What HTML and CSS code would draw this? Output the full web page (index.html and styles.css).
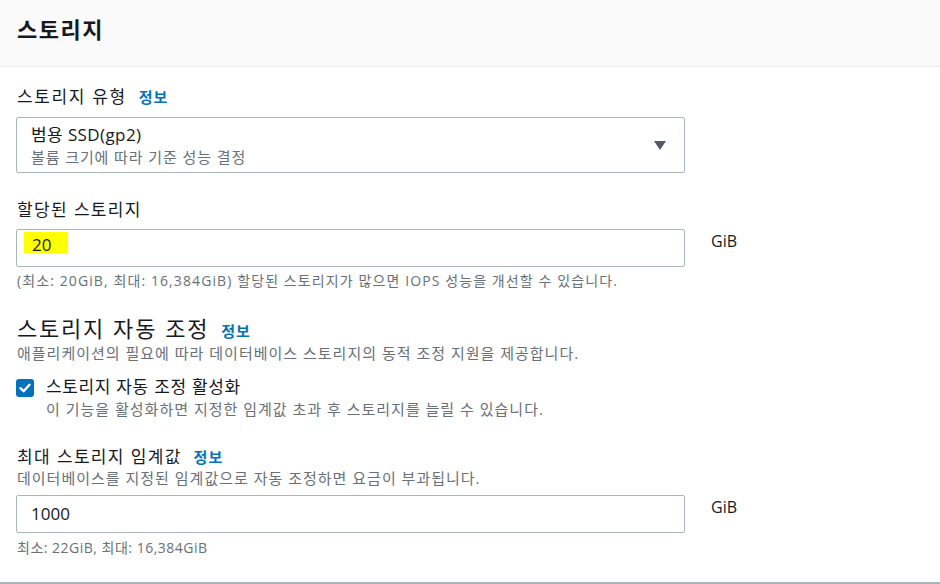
FILE: index.html
```html
<!DOCTYPE html>
<html lang="ko">
<head>
<meta charset="utf-8">
<link rel="stylesheet" href="styles.css">
</head>
<body>
<div class="panel">
  <div class="panel-header">
    <h2 class="panel-title">스토리지</h2>
  </div>
  <div class="panel-body">
    <div class="field">
      <div class="label-row"><span class="label label-type">스토리지 유형</span><a class="info">정보</a></div>
      <div class="select">
        <div class="select-text">
          <div class="select-main">범용 SSD(gp2)</div>
          <div class="select-sub">볼륨 크기에 따라 기준 성능 결정</div>
        </div>
        <svg class="caret" width="12" height="9" viewBox="0 0 12 9"><path d="M0 0 H12 L6 9 Z" fill="#545b64"/></svg>
      </div>
    </div>

    <div class="field field-alloc">
      <div class="label-row"><span class="label">할당된 스토리지</span></div>
      <div class="input-row">
        <div class="input input-hl"><span class="hl">20</span></div>
        <span class="unit">GiB</span>
      </div>
      <div class="hint">(최소: 20GiB, 최대: 16,384GiB) 할당된 스토리지가 많으면 IOPS 성능을 개선할 수 있습니다.</div>
    </div>

    <div class="section">
      <div class="label-row"><h3 class="section-title">스토리지 자동 조정</h3><a class="info">정보</a></div>
      <div class="desc">애플리케이션의 필요에 따라 데이터베이스 스토리지의 동적 조정 지원을 제공합니다.</div>
      <div class="check-row">
        <span class="checkbox"><svg width="14" height="14" viewBox="0 0 14 14"><path d="M2.5 7.2 L5.6 10.2 L11.5 3.8" fill="none" stroke="#fff" stroke-width="2.4" stroke-linecap="round" stroke-linejoin="round"/></svg></span>
        <div class="check-text">
          <div class="check-label">스토리지 자동 조정 활성화</div>
          <div class="desc">이 기능을 활성화하면 지정한 임계값 초과 후 스토리지를 늘릴 수 있습니다.</div>
        </div>
      </div>
    </div>

    <div class="field field-max">
      <div class="label-row"><span class="label">최대 스토리지 임계값</span><a class="info">정보</a></div>
      <div class="desc">데이터베이스를 지정된 임계값으로 자동 조정하면 요금이 부과됩니다.</div>
      <div class="input-row input-row-max">
        <div class="input">1000</div>
        <span class="unit">GiB</span>
      </div>
      <div class="hint hint-short">최소: 22GiB, 최대: 16,384GiB</div>
    </div>
  </div>
</div>
</body>
</html>
```
FILE: styles.css
```css
html, body {
  margin: 0;
  padding: 0;
  background: #ffffff;
}
body {
  font-family: "Open Sans", "Noto Sans CJK KR", sans-serif;
  color: #16191f;
  width: 940px;
  height: 584px;
  overflow: hidden;
}
.panel {
  border-bottom: 2px solid #a9b4b5;
  height: 582px;
}
.panel-header {
  background: #fafafa;
  border-bottom: 1px solid #eaeded;
  height: 66px;
  padding: 0 17px;
  display: flex;
  align-items: center;
}
.panel-title {
  margin: 0;
  font-size: 22px;
  font-weight: 700;
  line-height: 30px;
  letter-spacing: 1.5px;
  padding-bottom: 11px;
  font-family: "Noto Sans CJK KR", sans-serif;
}
.panel-body {
  padding: 18px 0 0 16px;
}
.label-row {
  display: flex;
  align-items: baseline;
  padding-left: 1px;
}
.label {
  font-size: 17px;
  line-height: 22px;
  letter-spacing: 1.3px;
  font-family: "Noto Sans CJK KR", sans-serif;
}
.label-type {
  letter-spacing: 1.6px;
}
.info {
  color: #0073bb;
  font-size: 15px;
  font-weight: 700;
  letter-spacing: 1px;
  margin-left: 12px;
  font-family: "Noto Sans CJK KR", sans-serif;
}
.select {
  margin-top: 10px;
  width: 669px;
  height: 56px;
  box-sizing: border-box;
  border: 1px solid #aab7b8;
  border-radius: 2px;
  display: flex;
  align-items: center;
  padding: 0 18px 0 14px;
}
.select-text {
  flex: 1;
  margin-top: -1px;
}
.select-main {
  font-size: 17px;
  line-height: 24px;
  letter-spacing: 0.4px;
}
.select-sub {
  font-size: 15px;
  line-height: 20px;
  letter-spacing: 0.9px;
  color: #687078;
}
.caret {
  display: block;
}
.field-alloc {
  margin-top: 25px;
}
.input-row {
  display: flex;
  align-items: flex-start;
  margin-top: 9px;
}
.input {
  width: 669px;
  height: 38px;
  box-sizing: border-box;
  border: 1px solid #aab7b8;
  border-radius: 2px;
  padding: 0 14px;
  font-size: 17px;
  line-height: 36px;
}
.input-hl {
  padding: 2px 7px 0;
  line-height: 20px;
}
.hl {
  display: inline-block;
  background: #ffff00;
  padding: 4px 17px 0 8px;
  height: 21px;
  box-sizing: border-box;
  line-height: 17px;
}
.unit {
  margin-left: 26px;
  font-size: 16px;
  line-height: 24px;
}
.hint {
  margin-top: 5px;
  font-size: 14px;
  line-height: 18px;
  letter-spacing: 1.1px;
  color: #687078;
  padding-left: 1px;
}
.hint-short {
  letter-spacing: 0.5px;
}
.section {
  margin-top: 24px;
}
.section-title {
  margin: 0;
  font-size: 22px;
  font-weight: 400;
  line-height: 26px;
  letter-spacing: 1.8px;
  font-family: "Noto Sans CJK KR", sans-serif;
}
.desc {
  font-size: 15px;
  line-height: 20px;
  letter-spacing: 1px;
  color: #687078;
  padding-left: 1px;
}
.section > .desc {
  margin-top: 2px;
}
.check-row {
  display: flex;
  align-items: flex-start;
  margin-top: 12px;
}
.checkbox {
  width: 18px;
  height: 18px;
  margin-top: 4px;
  background: #0073bb;
  border-radius: 3px;
  display: flex;
  align-items: center;
  justify-content: center;
}
.check-text {
  margin-left: 12px;
}
.check-text .desc {
  padding-left: 0;
  margin-top: 2px;
}
.check-label {
  font-size: 17px;
  line-height: 22px;
  letter-spacing: 0.6px;
  font-family: "Noto Sans CJK KR", sans-serif;
}
.field-max {
  margin-top: 26px;
}
.field-max .desc {
  margin-top: 1px;
}
.input-row-max {
  margin-top: 7px;
}
.field-max .hint {
  margin-top: 6px;
}
```
